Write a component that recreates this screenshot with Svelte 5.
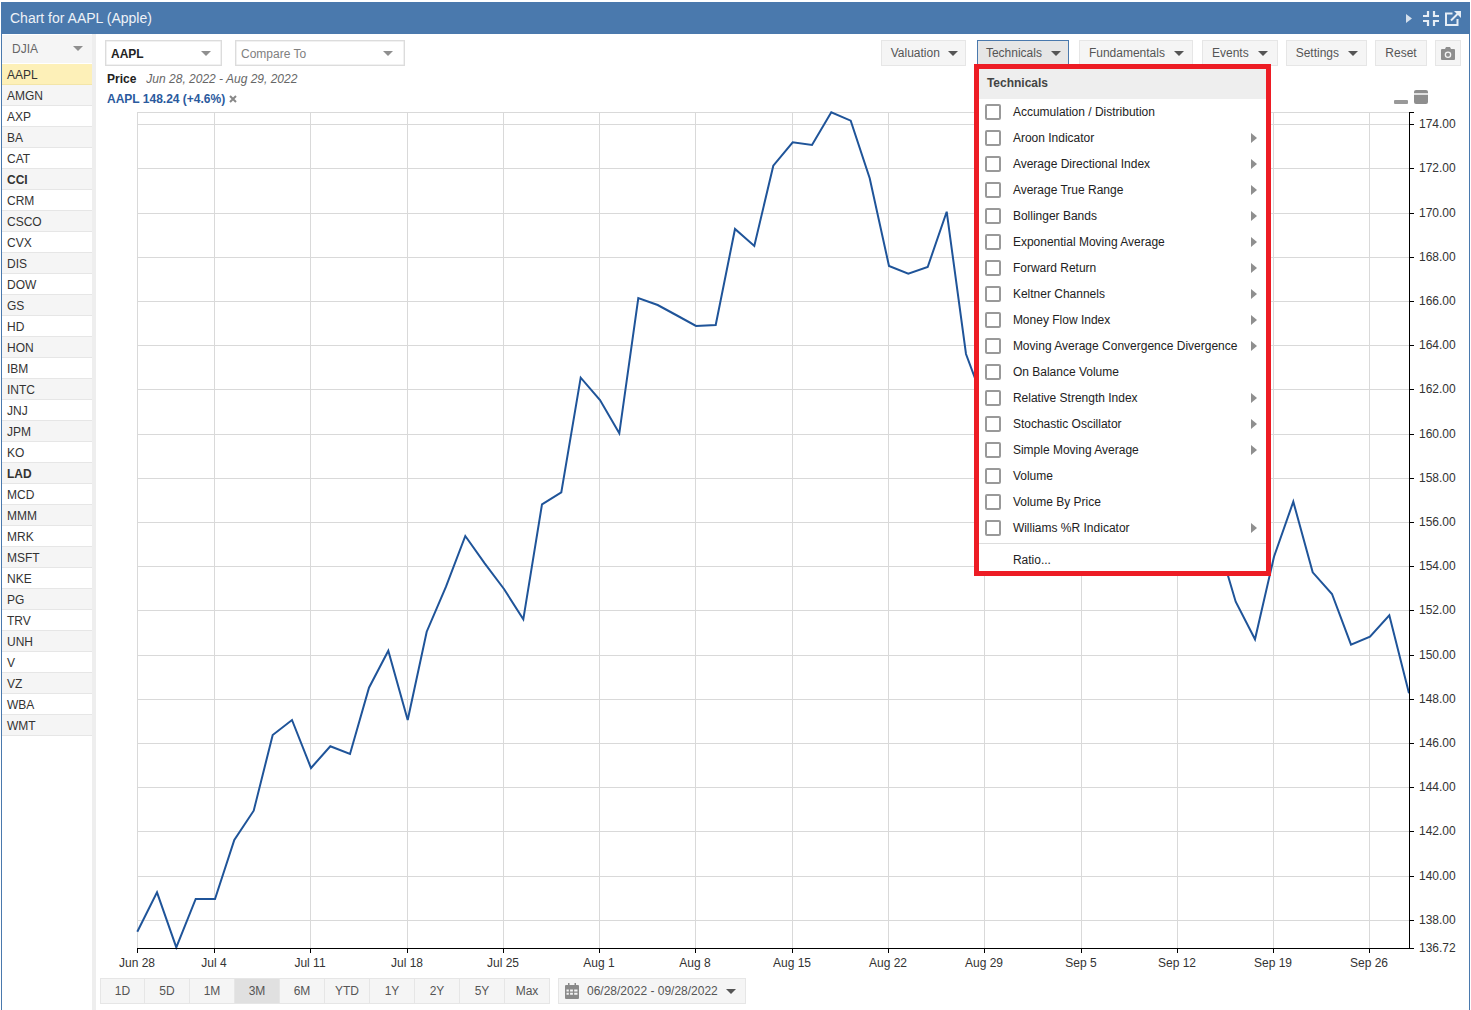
<script>
	const symbols = ['AAPL', 'AMGN', 'AXP', 'BA', 'CAT', 'CCI', 'CRM', 'CSCO', 'CVX', 'DIS', 'DOW', 'GS', 'HD', 'HON', 'IBM', 'INTC', 'JNJ', 'JPM', 'KO', 'LAD', 'MCD', 'MMM', 'MRK', 'MSFT', 'NKE', 'PG', 'TRV', 'UNH', 'V', 'VZ', 'WBA', 'WMT'];
	const boldSymbols = ['CCI', 'LAD'];

	const technicals = [
		['Accumulation / Distribution', false],
		['Aroon Indicator', true],
		['Average Directional Index', true],
		['Average True Range', true],
		['Bollinger Bands', true],
		['Exponential Moving Average', true],
		['Forward Return', true],
		['Keltner Channels', true],
		['Money Flow Index', true],
		['Moving Average Convergence Divergence', true],
		['On Balance Volume', false],
		['Relative Strength Index', true],
		['Stochastic Oscillator', true],
		['Simple Moving Average', true],
		['Volume', false],
		['Volume By Price', false],
		['Williams %R Indicator', true]
	];

	const ranges = ['1D', '5D', '1M', '3M', '6M', 'YTD', '1Y', '2Y', '5Y', 'Max'];

	const priceTicks = [
		['174.00', 124], ['172.00', 168], ['170.00', 213], ['168.00', 257], ['166.00', 301],
		['164.00', 345], ['162.00', 389], ['160.00', 434], ['158.00', 478], ['156.00', 522],
		['154.00', 566], ['152.00', 610], ['150.00', 655], ['148.00', 699], ['146.00', 743],
		['144.00', 787], ['142.00', 831], ['140.00', 876], ['138.00', 920]
	];

	const dateTicks = [
		['Jun 28', 137], ['Jul 4', 214], ['Jul 11', 310], ['Jul 18', 407], ['Jul 25', 503],
		['Aug 1', 599], ['Aug 8', 695], ['Aug 15', 792], ['Aug 22', 888], ['Aug 29', 984],
		['Sep 5', 1081], ['Sep 12', 1177], ['Sep 19', 1273], ['Sep 26', 1369]
	];

	const line = '137.3,931.7 157,892.3 176.3,947.3 195.7,899 215,899 234.3,840 253.7,810.7 272.7,735 292,720 311,768 330.3,746.3 350,754 369,687.7 388.3,650.7 407.7,720 426.7,631.7 446,586.7 465.3,536 484.7,563.3 504,589 523.3,619.3 542,504.3 561.3,492.3 580.7,377.7 600,400 619.3,433.3 638.3,298 657.7,305 677,315.5 696,326 715.7,325 735,229 754.3,246 773.3,165.7 792.7,142.3 812,145 831.3,112.3 850.7,120.7 869.7,178.3 889,266 908.3,273.7 927.7,267 946.7,211.7 966,354 985,405 1216,540 1228.3,576.7 1235.7,601.7 1255,639.3 1274,556.7 1293.3,501.7 1312.7,572.3 1332,594 1351,644.7 1370,636.7 1389.3,615.3 1409,693.3';
</script>

<div class="frame">
	<header class="title">
		<span>Chart for AAPL (Apple)</span>
		<div class="title-icons">
			<svg class="collapse" width="6" height="9" viewBox="0 0 6 9"><path d="M0 0l6 4.500-6 4.500z" fill="#d5e0ec" /></svg>
			<svg width="16" height="15" viewBox="0 0 16 15" fill="none" stroke="#e6edf5" stroke-width="2.2"><path d="M5 0v5H0M11 0v5h5M0 10h5v5M16 10h-5v5" /></svg>
			<svg width="16" height="15" viewBox="0 0 16 15" fill="none" stroke="#e6edf5" stroke-width="2"><path d="M7.500 2.500H1v11.500h11.500V8" /><path d="M6 9.500l7.500-7.500" /><path d="M9 0h7v7z" fill="#e6edf5" stroke="none" /></svg>
		</div>
	</header>

	<div class="body">
		<aside class="sidebar">
			<button class="index-btn">DJIA<i class="caret"></i></button>
			<ul>
				{#each symbols as s, i}
					<li class:active={i === 0} class:odd={i % 2 === 1} class:bold={boldSymbols.includes(s)}>{s}</li>
				{/each}
			</ul>
		</aside>

		<main class="main">
			<div class="toolbar">
				<div class="select symbol">AAPL<i class="caret"></i></div>
				<div class="select compare">Compare To<i class="caret"></i></div>

				<div class="actions">
					<button class="btn valuation">Valuation<i class="caret dark"></i></button>
					<div class="menu-anchor">
						<button class="btn open">Technicals<i class="caret dark"></i></button>
						<div class="menu">
							<div class="menu-head">Technicals</div>
							{#each technicals as [label, more]}
								<div class="menu-item">
									<span class="check"></span>
									<span class="menu-label">{label}</span>
									{#if more}<i class="arrow"></i>{/if}
								</div>
							{/each}
							<div class="menu-rule"></div>
							<div class="menu-ratio">Ratio...</div>
						</div>
					</div>
					<button class="btn fundamentals">Fundamentals<i class="caret dark"></i></button>
					<button class="btn events">Events<i class="caret dark"></i></button>
					<button class="btn settings">Settings<i class="caret dark"></i></button>
					<button class="btn plain">Reset</button>
					<button class="btn camera" aria-label="Snapshot">
						<svg width="14" height="13" viewBox="0 0 14 13"><path fill-rule="evenodd" d="M1 2h3l1-2h4l1 2h3a1 1 0 0 1 1 1v9a1 1 0 0 1-1 1H1a1 1 0 0 1-1-1V3a1 1 0 0 1 1-1zm6 2.500a3.300 3.300 0 1 0 0 6.600 3.300 3.300 0 0 0 0-6.600zm0 1.300a2 2 0 1 1 0 4 2 2 0 0 1 0-4z" fill="#8e8e8e" /></svg>
					</button>
				</div>
			</div>

			<div class="caption"><b>Price</b><em>Jun 28, 2022 - Aug 29, 2022</em></div>
			<div class="legend">
				<b>AAPL 148.24 (+4.6%)</b>
				<svg width="8" height="8" viewBox="0 0 8 8"><path d="M1 1l6 6M7 1L1 7" stroke="#888" stroke-width="2" /></svg>
			</div>

			<div class="chart">
				<div class="pane-icons">
					<i class="minimize"></i>
					<i class="maximize"></i>
				</div>
				<svg width="1373" height="866" viewBox="96 106 1373 866">
					<g stroke="#d9d9d9" stroke-width="1">
						<line x1="137" x2="1409" y1="112.500" y2="112.500" />
						{#each priceTicks as [, y]}
							<line x1="137" x2="1409" y1={y + 0.5} y2={y + 0.5} />
						{/each}
						{#each dateTicks as [, x]}
							<line x1={x + 0.5} x2={x + 0.5} y1="112" y2="948" />
						{/each}
					</g>
					<polyline points={line} fill="none" stroke="#1f5499" stroke-width="2" stroke-linejoin="miter" />
					<g stroke="#000" stroke-width="1">
						<line x1="137" x2="1410" y1="948.500" y2="948.500" />
						<line x1="1409.500" x2="1409.500" y1="112" y2="949" />
						<line x1="1409" x2="1414" y1="112.500" y2="112.500" />
						<line x1="1409" x2="1414" y1="948.500" y2="948.500" />
						{#each priceTicks as [, y]}
							<line x1="1409" x2="1414" y1={y + 0.5} y2={y + 0.5} />
						{/each}
						{#each dateTicks as [, x]}
							<line x1={x + 0.5} x2={x + 0.5} y1="948" y2="953" />
						{/each}
					</g>
					<g class="axis-text">
						{#each priceTicks as [label, y]}
							<text x="1419" y={y + 3.5}>{label}</text>
						{/each}
						<text x="1419" y="952">136.72</text>
						{#each dateTicks as [label, x]}
							<text x={x} y="967" text-anchor="middle">{label}</text>
						{/each}
					</g>
				</svg>
			</div>

			<div class="ranges">
				<div class="range-group">
					{#each ranges as r}
						<button class="range" class:current={r === '3M'}>{r}</button>
					{/each}
				</div>
				<button class="dates">
					<svg width="14" height="16" viewBox="0 0 14 16"><path fill-rule="evenodd" d="M3 0h1.500v2h5V0H11v2h2a1 1 0 0 1 1 1v12a1 1 0 0 1-1 1H1a1 1 0 0 1-1-1V3a1 1 0 0 1 1-1h2zM1.500 6.500v2h2.300v-2zm3.600 0v2h2.800v-2zm4.100 0v2h3.300v-2zm-7.700 3.300v2h2.300v-2zm3.600 0v2h2.800v-2zm4.100 0v2h3.300v-2z" fill="#8a8a8a" /></svg>
					<span>06/28/2022 - 09/28/2022</span>
					<i class="caret dark"></i>
				</button>
			</div>
		</main>
	</div>
</div>

<style>
	:global(body) {
		background: #fff;
		overflow: hidden;
	}

	.frame {
		position: relative;
		box-sizing: border-box;
		width: 1469px;
		height: 1008px;
		margin: 2px 0 0 1px;
		border-left: 1px solid #4a79ad;
		border-right: 1px solid #4a79ad;
		font: 12px/14px "Liberation Sans", Arial, sans-serif;
		color: #333;
		overflow: hidden;
	}

	.title {
		display: flex;
		align-items: center;
		justify-content: space-between;
		height: 32px;
		margin-left: -1px;
		margin-right: -1px;
		padding: 0 9px;
		background: #4a79ad;
		color: #eef2f7;
		font-size: 14px;
	}

	.title-icons {
		display: flex;
		align-items: center;
		gap: 6px;
	}

	.collapse {
		margin-right: 5px;
	}

	.body {
		display: flex;
		height: 976px;
	}

	.sidebar {
		flex: none;
		box-sizing: border-box;
		width: 94px;
		border-right: 4px solid #eee;
		padding-top: 1px;
	}

	.index-btn {
		display: flex;
		align-items: center;
		justify-content: space-between;
		box-sizing: border-box;
		width: 100%;
		height: 28px;
		padding: 0 9px 1px 10px;
		border: 0;
		background: #f5f5f5;
		color: #666;
		font: inherit;
	}

	ul {
		list-style: none;
		margin: 1px 0 0;
		padding: 0;
	}

	li {
		box-sizing: border-box;
		height: 21px;
		padding: 4px 0 0 5px;
		border-bottom: 1px solid #e6e6e6;
		color: #333;
	}

	li.odd {
		background: #f5f5f5;
	}

	li.active {
		background: #fdf0b8;
		border-bottom-color: #f3e5a8;
	}

	li.bold {
		font-weight: bold;
	}

	.caret {
		display: inline-block;
		flex: none;
		width: 0;
		height: 0;
		border-left: 5px solid transparent;
		border-right: 5px solid transparent;
		border-top: 5px solid #8f8f8f;
	}

	.caret.dark {
		border-top-color: #555;
	}

	.main {
		flex: 1;
		min-width: 0;
	}

	.toolbar {
		display: flex;
		align-items: flex-start;
		gap: 13px;
		padding: 6px 0 0 9px;
	}

	.select {
		display: flex;
		align-items: center;
		justify-content: space-between;
		box-sizing: border-box;
		height: 26px;
		padding: 1px 11px 0 5px;
		border: 1px solid #dcdcdc;
		box-shadow: inset 0 0 0 0.5px #e4e4e4;
		background: #fff;
	}

	.symbol {
		width: 117px;
		padding-right: 10px;
		font-weight: bold;
		color: #222;
	}

	.compare {
		width: 170px;
		color: #808080;
	}

	.actions {
		display: flex;
		gap: 8px;
		margin-left: auto;
		margin-right: 8px;
	}

	.btn {
		display: flex;
		align-items: center;
		gap: 9px;
		box-sizing: border-box;
		height: 26px;
		padding: 0 7px 0 9px;
		border: 1px solid #e6e6e6;
		background: #f5f5f5;
		color: #555;
		font: inherit;
	}

	.btn.valuation {
		gap: 8px;
	}

	.btn.open {
		background: #e6e6e6;
		border-color: #4a79ad;
		padding-left: 8px;
		padding-right: 7px;
	}

	.menu-anchor {
		position: relative;
		margin-left: 3px;
	}

	.btn.fundamentals {
		margin-left: 2px;
		padding-right: 8px;
	}

	.btn.events {
		margin-left: 1px;
		padding-right: 9px;
	}

	.btn.settings {
		padding-right: 8px;
	}

	.btn.plain {
		width: 52px;
		justify-content: center;
		padding: 0;
	}

	.btn.camera {
		justify-content: center;
		width: 26px;
		padding: 0;
	}

	.menu {
		position: absolute;
		z-index: 5;
		top: 24px;
		left: -3px;
		box-sizing: border-box;
		width: 297px;
		border: 5px solid #ed1c24;
		background: #fff;
		color: #222;
	}

	.menu-head {
		box-sizing: border-box;
		height: 30px;
		padding: 7px 8px 0;
		background: #eee;
		color: #444;
		font-weight: bold;
	}

	.menu-item {
		display: flex;
		align-items: center;
		height: 26px;
		padding: 0 9px 0 6px;
	}

	.check {
		flex: none;
		box-sizing: border-box;
		width: 16px;
		height: 16px;
		margin-right: 12px;
		border: 2px solid #999;
		border-radius: 2px;
		background: #fff;
	}

	.menu-label {
		flex: 1;
	}

	.arrow {
		flex: none;
		width: 0;
		height: 0;
		border-top: 5px solid transparent;
		border-bottom: 5px solid transparent;
		border-left: 6px solid #8f8f8f;
	}

	.menu-rule {
		height: 1px;
		margin-top: 2px;
		background: #ddd;
	}

	.menu-ratio {
		padding: 9px 0 4px 34px;
	}

	.caption {
		display: flex;
		gap: 10px;
		padding: 6px 0 0 11px;
		color: #222;
	}

	.caption em {
		color: #666;
	}

	.legend {
		display: flex;
		align-items: center;
		gap: 4px;
		padding: 6px 0 0 11px;
		color: #2a5a9e;
	}

	.chart {
		position: relative;
		height: 866px;
	}

	.chart svg {
		display: block;
	}

	.axis-text text {
		fill: #333;
		font: 12px "Liberation Sans", Arial, sans-serif;
	}

	.pane-icons {
		position: absolute;
		top: -16px;
		left: 1298px;
		display: flex;
		align-items: flex-end;
		gap: 6px;
	}

	.minimize {
		width: 14px;
		height: 4px;
		border-radius: 1px;
		background: #999;
	}

	.maximize {
		width: 14px;
		height: 14px;
		border-radius: 2px;
		background: linear-gradient(#8e8e8e 3px, #e0e0e0 3px, #e0e0e0 5px, #8e8e8e 5px);
	}

	.ranges {
		display: flex;
		gap: 8px;
		padding: 6px 0 0 4px;
	}

	.range-group {
		display: flex;
	}

	.range {
		box-sizing: border-box;
		width: 45px;
		height: 26px;
		padding: 0;
		border: 1px solid #e6e6e6;
		border-left-width: 0;
		background: #f5f5f5;
		color: #555;
		font: inherit;
	}

	.range:first-child {
		border-left-width: 1px;
	}

	.range.current {
		background: #e0e0e0;
	}

	.dates {
		display: flex;
		align-items: center;
		gap: 8px;
		box-sizing: border-box;
		width: 188px;
		height: 26px;
		padding: 0 9px 0 6px;
		border: 1px solid #e6e6e6;
		background: #f5f5f5;
		color: #555;
		font: inherit;
	}
</style>
